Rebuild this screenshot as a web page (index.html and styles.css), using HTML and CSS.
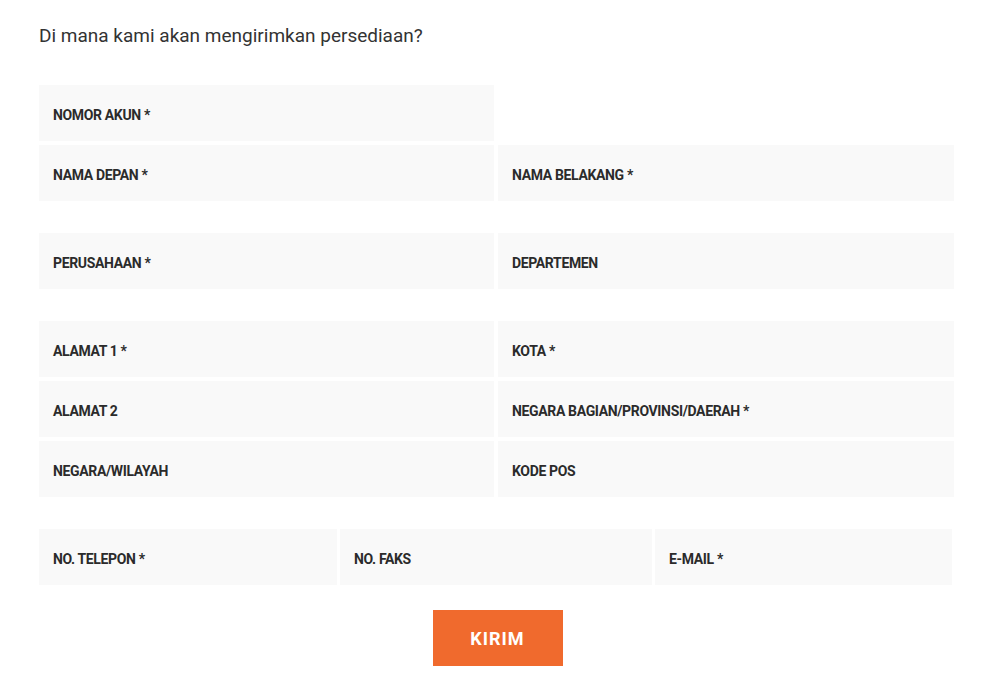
FILE: index.html
```html
<!DOCTYPE html>
<html lang="id">
<head>
    <meta charset="UTF-8">
    <meta name="viewport" content="width=device-width, initial-scale=1.0">
    <title>Persediaan</title>
    <link rel="stylesheet" href="styles.css">
</head>
<body>
    <form class="supply-form" onsubmit="return false;">
        <h2 class="form-title">Di mana kami akan mengirimkan persediaan?</h2>

        <!-- akun & nama -->
        <div class="field-group two-col">
            <label class="field">NOMOR AKUN *</label>
            <div class="field-empty"></div>
            <label class="field">NAMA DEPAN *</label>
            <label class="field">NAMA BELAKANG *</label>
        </div>

        <!-- perusahaan -->
        <div class="field-group two-col">
            <label class="field">PERUSAHAAN *</label>
            <label class="field">DEPARTEMEN</label>
        </div>

        <!-- alamat -->
        <div class="field-group two-col">
            <label class="field">ALAMAT 1 *</label>
            <label class="field">KOTA *</label>
            <label class="field">ALAMAT 2</label>
            <label class="field">NEGARA BAGIAN/PROVINSI/DAERAH *</label>
            <label class="field">NEGARA/WILAYAH</label>
            <label class="field">KODE POS</label>
        </div>

        <!-- kontak -->
        <div class="field-group three-col">
            <label class="field">NO. TELEPON *</label>
            <label class="field">NO. FAKS</label>
            <label class="field">E-MAIL *</label>
        </div>

        <div class="actions">
            <button class="submit-btn" type="submit">KIRIM</button>
        </div>
    </form>
</body>
</html>
```

FILE: styles.css
```css
body {
    margin: 0;
    padding: 0;
    background: #ffffff;
    font-family: Roboto, "Liberation Sans", sans-serif;
    color: #2b2b2b;
}

.supply-form {
    width: 915px;
    padding: 23px 0 0 39px;
}

/* judul */
.form-title {
    margin: 0 0 36px;
    font-size: 19px;
    line-height: 26px;
    font-weight: 400;
    color: #333333;
}

/* grup field */
.field-group {
    display: grid;
    gap: 4px;
    margin-bottom: 32px;
}

.two-col {
    grid-template-columns: 455px 456px;
}

.three-col {
    grid-template-columns: 298px 312px 297px;
    gap: 4px 3px;
    margin-bottom: 25px;
}

.field {
    height: 56px;
    box-sizing: border-box;
    display: flex;
    align-items: center;
    padding: 3px 0 0 14px;
    background: #f9f9f9;
    font-size: 14px;
    font-weight: 700;
    letter-spacing: -0.35px;
    color: #2b2b2b;
}

.field-empty {
    height: 56px;
}

/* tombol */
.actions {
    display: flex;
    justify-content: center;
}

.submit-btn {
    width: 130px;
    height: 56px;
    margin-left: 2px;
    border: none;
    background: #f06a2d;
    color: #ffffff;
    font-family: Roboto, "Liberation Sans", sans-serif;
    font-size: 18px;
    font-weight: 700;
    letter-spacing: 1px;
    cursor: pointer;
}
```
